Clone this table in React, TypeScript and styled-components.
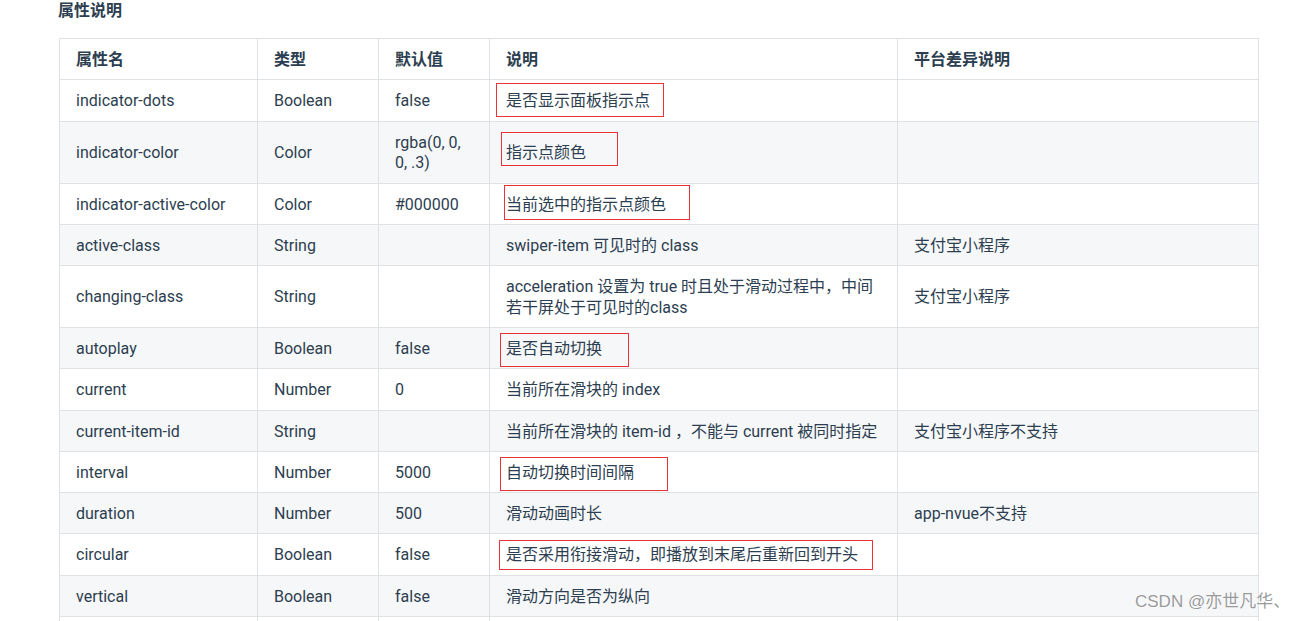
import React from "react";
import styled, { createGlobalStyle } from "styled-components";

const GlobalStyle = createGlobalStyle`
  html, body {
    margin: 0;
    padding: 0;
    overflow: hidden;
    background: #ffffff;
  }
  body {
    font-family: Roboto, "Noto Sans CJK SC", sans-serif;
    color: #2c3e50;
  }
`;

const Page = styled.div`
  position: relative;
  width: 1308px;
  height: 621px;
  overflow: hidden;
  padding: 0 0 0 59px;
  box-sizing: border-box;
`;

const Title = styled.h3`
  margin: 0 0 0 -1px;
  padding-top: 1px;
  font-size: 16px;
  line-height: 20px;
  font-weight: 700;
  color: #2c3e50;
`;

const Table = styled.table`
  margin-top: 17px;
  width: 1199px;
  table-layout: fixed;
  border-collapse: collapse;
  font-size: 16px;
  color: #2c3e50;
`;

const Row = styled.tr<{ $striped: boolean }>`
  background: ${(p) => (p.$striped ? "#f6f7f9" : "#ffffff")};
`;

const HeadCell = styled.th`
  border: 1px solid #dfe2e5;
  padding: 10.75px 16px 8.75px;
  line-height: 20.75px;
  text-align: left;
  font-weight: 700;
`;

const Cell = styled.td`
  border: 1px solid #dfe2e5;
  padding: 11px 16px 8.5px;
  line-height: 20.75px;
  text-align: left;
  vertical-align: middle;
  overflow-wrap: break-word;
`;

const Mark = styled.div`
  position: absolute;
  border: 1px solid #e8333a;
  box-sizing: border-box;
  pointer-events: none;
`;

const Watermark = styled.div`
  position: absolute;
  left: 1135px;
  top: 591px;
  font-family: "Liberation Sans", "Noto Sans CJK SC", sans-serif;
  font-size: 17px;
  line-height: 22px;
  color: rgba(110, 110, 110, 0.7);
  text-shadow: 0 0 1px rgba(255, 255, 255, 0.8);
  white-space: nowrap;
`;

type Attr = [string, string, string, string, string];

const rows: Attr[] = [
  ["indicator-dots", "Boolean", "false", "是否显示面板指示点", ""],
  ["indicator-color", "Color", "rgba(0, 0, 0, .3)", "指示点颜色", ""],
  ["indicator-active-color", "Color", "#000000", "当前选中的指示点颜色", ""],
  ["active-class", "String", "", "swiper-item 可见时的 class", "支付宝小程序"],
  [
    "changing-class",
    "String",
    "",
    "acceleration 设置为 true 时且处于滑动过程中，中间若干屏处于可见时的class",
    "支付宝小程序",
  ],
  ["autoplay", "Boolean", "false", "是否自动切换", ""],
  ["current", "Number", "0", "当前所在滑块的 index", ""],
  [
    "current-item-id",
    "String",
    "",
    "当前所在滑块的 item-id ，不能与 current 被同时指定",
    "支付宝小程序不支持",
  ],
  ["interval", "Number", "5000", "自动切换时间间隔", ""],
  ["duration", "Number", "500", "滑动动画时长", "app-nvue不支持"],
  ["circular", "Boolean", "false", "是否采用衔接滑动，即播放到末尾后重新回到开头", ""],
  ["vertical", "Boolean", "false", "滑动方向是否为纵向", ""],
  ["previous-margin", "String", "0px", "前边距，可用于露出前一项的一小部分，接受 px 和 rpx 值", "头条小程序不支持"],
];

const marks = [
  { left: 496, top: 83, width: 168, height: 34 },
  { left: 501, top: 132, width: 117, height: 34 },
  { left: 504, top: 185, width: 186, height: 35 },
  { left: 500, top: 333, width: 129, height: 34 },
  { left: 500, top: 457, width: 168, height: 34 },
  { left: 499, top: 540, width: 374, height: 30 },
];

export default function App() {
  return (
    <>
      <GlobalStyle />
      <Page>
        <Title>属性说明</Title>
        <Table>
          <colgroup>
            <col style={{ width: 198 }} />
            <col style={{ width: 121 }} />
            <col style={{ width: 111 }} />
            <col style={{ width: 408 }} />
            <col style={{ width: 361 }} />
          </colgroup>
          <thead>
            <Row $striped={false}>
              <HeadCell>属性名</HeadCell>
              <HeadCell>类型</HeadCell>
              <HeadCell>默认值</HeadCell>
              <HeadCell>说明</HeadCell>
              <HeadCell>平台差异说明</HeadCell>
            </Row>
          </thead>
          <tbody>
            {rows.map((r, i) => (
              <Row key={r[0]} $striped={i % 2 === 1}>
                {r.map((c, j) => (
                  <Cell key={j}>{c}</Cell>
                ))}
              </Row>
            ))}
          </tbody>
        </Table>
        {marks.map((m, i) => (
          <Mark key={i} style={m} />
        ))}
        <Watermark>CSDN @亦世凡华、</Watermark>
      </Page>
    </>
  );
}
